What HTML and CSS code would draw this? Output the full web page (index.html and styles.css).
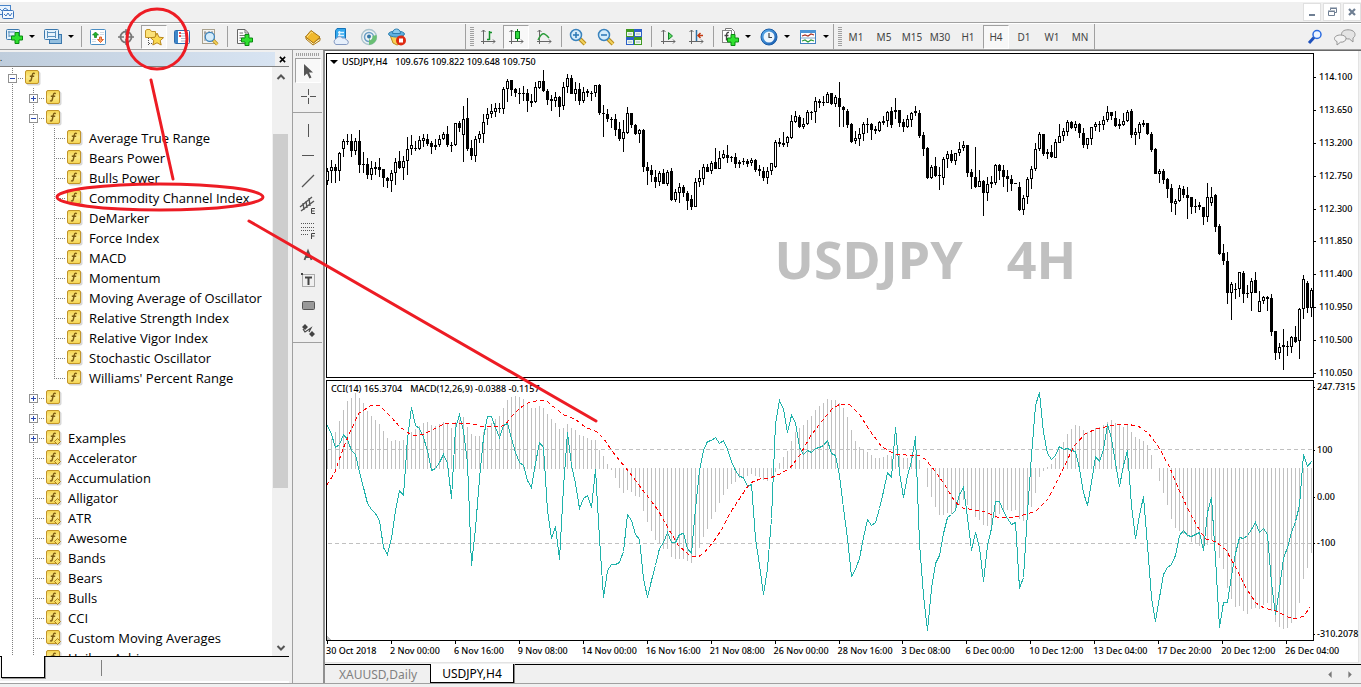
FILE: index.html
```html
<!DOCTYPE html>
<html lang="en">
<head>
<meta charset="utf-8">
<title>USDJPY,H4</title>
<link rel="stylesheet" href="styles.css">
</head>
<body>
<svg class="defs" aria-hidden="true">
  <defs>
    <linearGradient id="gold" x1="0" y1="0" x2="0" y2="1"><stop offset="0" stop-color="#f3d24c"/><stop offset="0.5" stop-color="#fbe98a"/><stop offset="1" stop-color="#f4d552"/></linearGradient>
    <linearGradient id="blue" x1="0" y1="0" x2="1" y2="1"><stop offset="0" stop-color="#5fb4f0"/><stop offset="1" stop-color="#1457ad"/></linearGradient>
    <symbol id="fn" viewBox="0 0 16 16">
      <rect x="1.5" y="1.5" width="14" height="14" rx="2" fill="#d8d8d8"/>
      <rect x="0.5" y="0.5" width="13" height="13" rx="1.5" fill="url(#gold)" stroke="#c2952a"/>
      <path d="M9.8 3.6C8 2.7 7.5 3.8 7.2 5.500L6.300 9.500C6 11 5.200 11.300 4 10.600M4.800 6.300H9.200" fill="none" stroke="#7d5c14" stroke-width="1.400"/>
    </symbol>
    <symbol id="fnc" viewBox="0 0 16 16">
      <use href="#fn"/>
      <path d="M11.500 8.500L14.500 11.500L11.500 14.500L8.500 11.500Z" fill="#f8df6a" stroke="#a87f1c"/>
    </symbol>
    <symbol id="plus" viewBox="0 0 12 12"><path d="M4 .5H8V4H11.500V8H8V11.500H4V8H.5V4H4Z" fill="#2fe02f" stroke="#0b8a12"/></symbol>
    <symbol id="magnify" viewBox="0 0 18 18">
      <path d="M11 11L16 16" stroke="#b98b1c" stroke-width="4"/><path d="M11 11L16 16" stroke="#f3d35c" stroke-width="2"/>
      <circle cx="7" cy="7" r="5.500" fill="#d5ecfa" stroke="#3a83bd" stroke-width="1.500"/>
    </symbol>
    <symbol id="axes" viewBox="0 0 18 18"><path d="M4.500 2V16M2 13.500H16M2.500 4L4.500 2L6.500 4M14 11.500L16 13.500L14 15.500" fill="none" stroke="#666"/></symbol>
  </defs>
</svg>

<div class="app">
  <header class="titlebar">
    <svg class="app-icon" viewBox="0 0 15 15"><rect x="-3.500" y=".5" width="14" height="9" fill="#e9f3fd" stroke="#4a84c8"/><path d="M0 4L2 6L5 3L8 5" fill="none" stroke="#4a84c8"/><rect x="2.500" y="5.500" width="11" height="8" rx="1" fill="#f4f9ff" stroke="#3b74bc"/><path d="M4 9L6 11L8 8L10 11L12 8" fill="none" stroke="#3b74bc"/></svg>
    <div class="window-buttons">
      <button aria-label="Minimize"><svg viewBox="0 0 16 16"><path d="M5 11H11" stroke="#6f7f93" stroke-width="2"/></svg></button>
      <button aria-label="Restore"><svg viewBox="0 0 16 16"><path d="M6.500 6V4.500H12.500V8.500H11M4.500 7.500H10.500V11.500H4.500ZM6 4H13M4 7H11" fill="none" stroke="#6f7f93"/></svg></button>
      <button aria-label="Close"><svg viewBox="0 0 16 16"><path d="M5 5L11 11M11 5L5 11" stroke="#6f7f93" stroke-width="2.200"/></svg></button>
    </div>
  </header>

  <nav class="toolbar">
    <div class="group">
      <button class="tool" aria-label="New chart"><svg viewBox="0 0 18 18"><rect x="1.500" y="1.500" width="13" height="10" rx="1" fill="#e6f2fb" stroke="#3b78ad"/><path d="M3 4H10M4 3V9M4 8H9" stroke="#5b91bd"/><use href="#plus" x="6" y="4" width="12" height="12"/></svg></button><button class="drop" aria-label="New chart list"></button>
      <button class="tool" aria-label="Profiles"><svg viewBox="0 0 18 18"><rect x="5.500" y="6.500" width="12" height="9" fill="#94bfdf" stroke="#3b78ad"/><rect x=".5" y="1.500" width="14" height="10" rx="1" fill="#e6f2fb" stroke="#3b78ad"/><path d="M3 4.500H12M3.500 3V10M11.500 3V10M3 8.500H12" stroke="#5b91bd"/></svg></button><button class="drop" aria-label="Profiles list"></button>
      <span class="sep"></span>
      <button class="tool" aria-label="Market watch"><svg viewBox="0 0 18 18"><rect x="1.500" y="1.500" width="15" height="15" rx="1" fill="#fff" stroke="#4a8ec4"/><path d="M11 4.500H15M11 6.500H15M3 11.500H7M3 13.500H7" stroke="#cfdae3"/><path d="M6.500 4L9.500 7H7.500V9.500H5.500V7H3.500Z" fill="#21b72b" stroke="#0e7d18" stroke-width=".7"/><path d="M11.500 14.500L8.500 11.500H10.500V9H12.500V11.500H14.500Z" fill="#f9a46a" stroke="#d8480f" stroke-width=".8"/></svg></button>
      <button class="tool" aria-label="Data window"><svg viewBox="0 0 18 18"><circle cx="9" cy="9" r="5.500" fill="none" stroke="#777" stroke-width="1.800"/><path d="M9 1V7M9 11V17M1 9H7M11 9H17" stroke="#777" stroke-width="1.500"/></svg></button>
      <button class="tool pressed" aria-label="Navigator"><svg viewBox="0 0 20 18"><path d="M1.500 9.500V2.500L3 1.500H6L7.500 3.500H11.500V9.500Z" fill="#fbe27a" stroke="#c29528"/><path d="M4.500 10V18M5 15.500H9" stroke="#555" stroke-dasharray="1 1"/><path d="M13 5L15 9.200L19.500 9.700L16.200 12.700L17.200 17L13 14.800L8.800 17L9.800 12.700L6.500 9.700L11 9.200Z" fill="#fbdb52" stroke="#b9861c"/></svg></button>
      <button class="tool" aria-label="Terminal"><svg viewBox="0 0 18 18"><rect x="1.500" y="2.500" width="15" height="13" rx="1" fill="#fff" stroke="#2d6cae"/><path d="M3.500 3V15" stroke="#3e86c9" stroke-width="3"/><path d="M8 5.500H15M8 8H15M8 10.500H15M8 13H15" stroke="#a8bed1"/><path d="M6 5H8M6 8H8" stroke="#e11" stroke-width="1.500"/></svg></button>
      <button class="tool" aria-label="Strategy tester"><svg viewBox="0 0 18 18"><rect x="1.500" y="1.500" width="12" height="14" fill="#f3f3f0" stroke="#aaa28e"/><path d="M4 3V13M8 3V9M11 3V7M3 5H12" stroke="#888"/><use href="#magnify" x="3" y="3" width="15" height="15"/></svg></button>
      <span class="sep"></span>
      <button class="tool" aria-label="New order"><svg viewBox="0 0 18 18"><path d="M2.500 1.500H10L13.500 5V15.500H2.500Z" fill="#fdfdfd" stroke="#666"/><path d="M10 1.500V5H13M4.500 5H8M4.500 7.500H11M4.500 10H9M4.500 12.500H8" stroke="#777" fill="none"/><use href="#plus" x="6" y="6" width="12" height="12"/></svg></button>
      <span class="gap"></span>
      <button class="tool" aria-label="MetaEditor"><svg viewBox="0 0 18 18"><path d="M2 8L9 15L16 10V12.500L9 17L2 11Z" fill="#fff1bb" stroke="#a87515"/><path d="M1.500 9L7 2.500L16 9L9.500 15Z" fill="#f1b92e" stroke="#a87515"/><path d="M3 9L7.500 4L9 5" stroke="#ffe48b" fill="none"/></svg></button>
      <button class="tool" aria-label="Virtual hosting"><svg viewBox="0 0 18 18"><path d="M3.500 2.500L5 .5H13.500V11H3.500Z" fill="#35a9ee" stroke="#1473b8"/><path d="M6 4.500H12M6 7.500H12M7.500 3V9" stroke="#dff3ff" stroke-width="1.500"/><path d="M4 16.500A3 3 0 0 1 3.800 11A4 4 0 0 1 10.500 10A3.200 3.200 0 0 1 14.500 12A2.300 2.300 0 0 1 14.500 16.500Z" fill="#e6effb" stroke="#8399c2"/></svg></button>
      <button class="tool" aria-label="Signals"><svg viewBox="0 0 18 18"><circle cx="9" cy="9" r="7.500" fill="#edf2f3" stroke="#a9c3cd" stroke-width="1.300"/><circle cx="9" cy="9" r="4.500" fill="none" stroke="#6c9fc5" stroke-width="1.500"/><path d="M9 9V17A8 8 0 0 0 16.500 7L12.500 8A4 4 0 0 1 10 12.500Z" fill="#6abf74"/><circle cx="9" cy="8.500" r="2" fill="#3577a8"/></svg></button>
      <button class="tool" aria-label="AutoTrading"><svg viewBox="0 0 18 18"><path d="M2 7L5 15L9 17L14 15L15 7Z" fill="#f7d053" stroke="#bb8a22"/><ellipse cx="8.500" cy="6" rx="8" ry="3" fill="#5eb0df" stroke="#2e7fb0"/><path d="M4.500 5.500C4.500-.5 12.500-.5 12.500 5.500Z" fill="#8dccee" stroke="#2e7fb0"/><circle cx="13" cy="12.500" r="5" fill="#de2b12"/><rect x="11" y="10.500" width="4" height="4" fill="#fff"/></svg></button>
    </div>
    <div class="group charts">
      <span class="grip"></span>
      <button class="tool" aria-label="Bar chart"><svg viewBox="0 0 18 18"><use href="#axes"/><path d="M10.500 3V12M8 11.500H10.500M10.500 4.500H13" stroke="#15902a" stroke-width="1.500"/></svg></button>
      <button class="tool pressed" aria-label="Candlesticks"><svg viewBox="0 0 18 18"><use href="#axes"/><path d="M10.500 1V13" stroke="#087b16"/><rect x="8.500" y="3.500" width="4" height="7" fill="#2fd83e" stroke="#087b16"/></svg></button>
      <button class="tool" aria-label="Line chart"><svg viewBox="0 0 18 18"><use href="#axes"/><path d="M3 12C7 4 9 4 14 10" fill="none" stroke="#2b9c3a" stroke-width="1.400"/></svg></button>
      <span class="sep"></span>
      <button class="tool" aria-label="Zoom in"><svg viewBox="0 0 18 18"><use href="#magnify"/><path d="M4 7H10M7 4V10" stroke="#2876b4" stroke-width="1.500"/></svg></button>
      <button class="tool" aria-label="Zoom out"><svg viewBox="0 0 18 18"><use href="#magnify"/><path d="M4 7H10" stroke="#2876b4" stroke-width="1.500"/></svg></button>
      <button class="tool" aria-label="Tile windows"><svg viewBox="0 0 18 18"><path d="M1 1H9V9H1ZM9 9H17V17H9Z" fill="#3f9a22"/><path d="M9 1H17V9H9ZM1 9H9V17H1Z" fill="#2c60c8"/><path d="M2 4H8V8H2ZM10 4H16V8H10ZM2 12H8V16H2ZM10 12H16V16H10Z" fill="#eef5ee"/><path d="M3 6H7M11 6H15M3 14H7M11 14H15" stroke="#9ab5bf"/></svg></button>
      <span class="sep"></span>
      <button class="tool" aria-label="Auto scroll"><svg viewBox="0 0 18 18"><use href="#axes"/><path d="M9.500 4.500L13.500 8L9.500 11.500Z" fill="#5fdc60" stroke="#12862a"/></svg></button>
      <button class="tool" aria-label="Chart shift"><svg viewBox="0 0 18 18"><use href="#axes"/><path d="M9.500 2V13" stroke="#2c72a8" stroke-width="1.500"/><path d="M16 7.500H12M13.500 5L11 7.500L13.500 10" fill="none" stroke="#c23a12" stroke-width="1.500"/></svg></button>
      <span class="sep"></span>
      <button class="tool" aria-label="Indicators"><svg viewBox="0 0 18 18"><path d="M4.500 3.500V.5H10.500L13.500 3.500V12.500H11" fill="#fff" stroke="#777"/><rect x="1.500" y="2.500" width="9" height="12" fill="#fff" stroke="#888"/><path d="M8 4.500C6 4 5.500 5.500 5.500 7.500V12.500M3.500 7.500H7.500" fill="none" stroke="#444" stroke-width="1.300"/><use href="#plus" x="6" y="6" width="12" height="12"/></svg></button><button class="drop" aria-label="Indicators list"></button>
      <button class="tool" aria-label="Periods"><svg viewBox="0 0 18 18"><circle cx="9" cy="9" r="8" fill="url(#blue)" stroke="#1a5ea8"/><circle cx="9" cy="9" r="5.500" fill="#edf6fd"/><path d="M9 5V9.500H12" fill="none" stroke="#444" stroke-width="1.200"/></svg></button><button class="drop" aria-label="Periods list"></button>
      <button class="tool" aria-label="Templates"><svg viewBox="0 0 18 18"><rect x="1.500" y="2.500" width="15" height="13" fill="#fff" stroke="#3f80bf"/><path d="M1 3.500H17" stroke="#4b95d6" stroke-width="3"/><path d="M3 8L6 7L9 8L12 6L15 7" fill="none" stroke="#a83225" stroke-width="1.200"/><path d="M2 10H16" stroke="#7ea8cc"/><path d="M3 13L6 12L9 14L12 12L15 13" fill="none" stroke="#2b9c3a" stroke-width="1.200"/></svg></button><button class="drop" aria-label="Templates list"></button>
    </div>
    <div class="group frames">
      <span class="grip"></span>
      <button class="tool">M1</button><button class="tool">M5</button><button class="tool">M15</button><button class="tool">M30</button><button class="tool">H1</button><button class="tool pressed">H4</button><button class="tool">D1</button><button class="tool">W1</button><button class="tool">MN</button>
    </div>
    <div class="group extras">
      <button class="tool" aria-label="Search"><svg viewBox="0 0 18 18"><circle cx="11" cy="6.500" r="4" fill="#eef5ff" stroke="#2a6be0" stroke-width="1.500"/><path d="M8 9.500L3 15" stroke="#1f52bd" stroke-width="3"/></svg></button>
      <button class="tool chat" aria-label="Chat"><svg viewBox="0 0 24 18"><path d="M20 10L20 14L16.500 11C11 11 8.500 8.500 8.500 6.500C8.500 3.500 11 1.800 15 1.800C19 1.800 22 3.500 22 6.500C22 8 21.500 9 20 10Z" fill="#e4e4e4" stroke="#969696"/><path d="M4 13.500L4 17L7.500 14.200C11 14.500 13 12.500 13 10.500C13 8.500 11 7 7.500 7C4 7 1.500 8.500 1.500 10.500C1.500 12 2.500 13 4 13.500Z" fill="#f3f3f3" stroke="#969696"/></svg></button>
    </div>
  </nav>

  <main class="workspace">
    <aside class="navigator">
      <div class="caption"><span class="caption-text">.</span><button class="close" aria-label="Close navigator"><svg viewBox="0 0 8 8"><path d="M1 1L7 7M7 1L1 7" stroke="#000" stroke-width="1.800"/></svg></button></div>
      <div class="tree-area">
        <div class="tree" id="tree"></div>
        <div class="scrollbar">
          <svg viewBox="0 0 10 10"><path d="M1.500 7L5 3.500L8.500 7" fill="none" stroke="#555" stroke-width="2"/></svg>
          <span class="thumb"></span>
          <svg viewBox="0 0 10 10"><path d="M1.500 3L5 6.500L8.500 3" fill="none" stroke="#555" stroke-width="2"/></svg>
        </div>
      </div>
      <div class="nav-tabs"><span class="nav-tab"></span><span class="nav-divider"></span></div>
    </aside>

    <div class="drawbar">
      <span class="grip-h"></span>
      <button class="pressed" aria-label="Cursor"><svg viewBox="0 0 18 18"><path d="M5 2V14L8 11.500L10.500 16.500L12.500 15.500L10 10.500H14Z" fill="#555"/></svg></button>
      <button aria-label="Crosshair"><svg viewBox="0 0 18 18"><path d="M9.500 2V8M9.500 11V17M2 9.500H8M11 9.500H17" stroke="#555"/></svg></button>
      <span class="rule"></span>
      <button aria-label="Vertical line"><svg viewBox="0 0 18 18"><path d="M9.500 3V16" stroke="#555"/></svg></button>
      <button aria-label="Horizontal line"><svg viewBox="0 0 18 18"><path d="M3 9.500H15" stroke="#555"/></svg></button>
      <button aria-label="Trendline"><svg viewBox="0 0 18 18"><path d="M3 16L15 4" stroke="#555" stroke-width="1.200"/></svg></button>
      <button aria-label="Channel"><svg viewBox="0 0 18 18"><path d="M1 11L13 1M2 15L15 5M4 7L5 14M7 5L8 12M10 2L11 10" stroke="#555" stroke-width="1.400"/><path d="M16 12.500H12.500V17.500H16M12.500 15H15.500" fill="none" stroke="#444"/></svg></button>
      <button aria-label="Fibonacci"><svg viewBox="0 0 18 18"><path d="M2 2.500H16M2 6.500H16M2 9.500H16M2 13.500H10" stroke="#555" stroke-dasharray="1 1"/><path d="M16 12.500H12.500V18M12.500 15H15.500" fill="none" stroke="#444"/></svg></button>
      <button aria-label="Text"><svg viewBox="0 0 18 18"><path d="M5.500 14L9 5L12.500 14M7 11H11" fill="none" stroke="#555" stroke-width="1.800"/></svg></button>
      <button aria-label="Label"><svg viewBox="0 0 18 18"><rect x="3.500" y="3.500" width="12" height="12" fill="none" stroke="#666" stroke-dasharray="1 1"/><path d="M6 6.500H13M9.500 6V14" stroke="#444" stroke-width="2"/><path d="M2 2H4V4H2Z" fill="#444"/></svg></button>
      <button aria-label="Rectangle"><svg viewBox="0 0 18 18"><rect x="3.500" y="5.500" width="12" height="8" rx="1" fill="#999" stroke="#555"/></svg></button>
      <button aria-label="Arrows"><svg viewBox="0 0 18 18"><path d="M6 3L9 6L6 9L3 6ZM13 10L16 13L13 16L10 13Z" fill="#444"/><path d="M4 8L6 11L12 7L10 11" fill="none" stroke="#444" stroke-width="1.200"/></svg></button>
      <span class="rule end"></span>
    </div>

    <section class="chart-window">
      <div class="panes">
        <div class="pane price">
          <div class="plot">
            <svg viewBox="326 53 988 325" preserveAspectRatio="none"><path id="wicks" class="wick"/><path id="bodies" class="body-down"/><path id="hollow" class="body-up"/></svg>
            <div class="watermark"><span>USDJPY</span><span>4H</span></div>
            <div class="plot-title"><span class="tri"></span><span class="symbol">USDJPY,H4</span><span>109.676 109.822 109.648 109.750</span></div>
          </div>
          <div class="axis price-axis"><span>114.100</span><span>113.650</span><span>113.200</span><span>112.750</span><span>112.300</span><span>111.850</span><span>111.400</span><span>110.950</span><span>110.500</span><span>110.050</span></div>
        </div>
        <div class="pane osc">
          <div class="plot">
            <svg viewBox="326 380 988 261" preserveAspectRatio="none"><path class="level" d="M328 449.500H1313M328 543.500H1313"/><path id="histogram" class="histogram"/><path id="cci" class="cci"/><path class="signal" d="M327 485L335 472L343 449L351 430L359 413L367 408L372 405L380 406L390 416L400 427L410 434L416 436L424 434L434 429L444 424L455 423L470 423L480 426L500 427L506 424L512 416L520 408L528 403L540 400L548 402L556 409L564 415L575 419L585 427L597 432L604 439L612 451L620 461L630 473L645 493L658 510L668 528L678 545L690 556L698 557L704 553L714 541L722 529L730 513L740 498L750 483L760 479L770 478L780 474L790 468L800 455L810 437L822 421L832 409L840 404L850 405L860 415L870 431L882 447L895 454L906 455L918 455L925 459L935 471L945 485L955 502L963 508L975 510L985 512L997 517L1010 518L1020 516L1036 511L1048 499L1056 483L1066 463L1074 446L1085 434L1096 429L1105 427L1115 425L1125 424L1138 426L1148 433L1158 446L1170 468L1180 492L1190 513L1200 531L1206 539L1216 542L1226 550L1236 568L1246 588L1256 603L1264 608L1276 611L1288 617L1296 619L1304 616L1310 607"/><path d="M327 635L332 641H327Z" fill="#c0c0c0"/></svg>
            <div class="plot-title"><span>CCI(14) 165.3704</span><span>MACD(12,26,9) -0.0388 -0.1157</span></div>
          </div>
          <div class="axis osc-axis"><span>247.7315</span><span>100</span><span>0.00</span><span>-100</span><span>-310.2078</span></div>
        </div>
        <div class="time-axis"><span>30 Oct 2018</span><span>2 Nov 00:00</span><span>6 Nov 16:00</span><span>9 Nov 08:00</span><span>14 Nov 00:00</span><span>16 Nov 16:00</span><span>21 Nov 08:00</span><span>26 Nov 00:00</span><span>28 Nov 16:00</span><span>3 Dec 08:00</span><span>6 Dec 00:00</span><span>10 Dec 12:00</span><span>13 Dec 04:00</span><span>17 Dec 20:00</span><span>20 Dec 12:00</span><span>26 Dec 04:00</span></div>
      </div>
      <div class="chart-tabs">
        <button class="chart-tab">XAUUSD,Daily</button><button class="chart-tab active">USDJPY,H4</button>
        <span class="tab-arrows"><button aria-label="Previous"><svg viewBox="0 0 8 8"><path d="M5 1V7L2 4Z" fill="#777"/></svg></button><button aria-label="Next"><svg viewBox="0 0 8 8"><path d="M3 1V7L6 4Z" fill="#777"/></svg></button></span>
      </div>
    </section>
  </main>

  <svg class="notes" aria-hidden="true"><circle cx="157" cy="39" r="30"/><path d="M151 80L173 179M249 221L596 421"/><ellipse cx="160" cy="197" rx="103" ry="13"/></svg>
</div>
<script src="app.js"></script>
</body>
</html>
```

FILE: styles.css
```css
* { box-sizing: border-box; }
body { margin: 0; font-family: "Noto Sans", "Open Sans", sans-serif; font-size: 12px; color: #000; background: #f0f0f0; }
button { border: 0; padding: 0; background: none; font: inherit; color: inherit; }
svg { display: block; }
.defs { position: absolute; width: 0; height: 0; }

.app { position: relative; display: flex; flex-direction: column; height: 100vh; padding-bottom: 3px; overflow: hidden; }

.titlebar { display: flex; justify-content: space-between; align-items: center; height: 23px; flex: none; border-top: 2px solid #fff; border-bottom: 1px solid #a0a0a0; }
.app-icon { width: 15px; height: 15px; }
.window-buttons { display: flex; gap: 2px; }
.window-buttons button { width: 18px; height: 18px; background: #fff; border: 1px solid #e0e0e0; }

.toolbar { display: flex; height: 27px; flex: none; border-top: 1px solid #fff; border-bottom: 1px solid #a0a0a0; }
.group { display: flex; align-items: center; }
.group.charts { margin-left: 54px; }
.group.charts, .group.frames { border-left: 1px solid #a0a0a0; padding-left: 4px; }
.group.frames { border-right: 1px solid #a0a0a0; font-size: 10px; color: #444; }
.group.extras { margin-left: auto; }
.tool { width: 28px; height: 24px; display: flex; align-items: center; justify-content: center; }
.tool svg { width: 18px; height: 18px; }
.tool.chat { width: 32px; margin-right: 0; }
.tool.chat svg { width: 24px; }
.pressed { border: 1px solid #a0a0a0; border-right-color: #fff; border-bottom-color: #fff; background: #f8f8f8; }
.tool.pressed { width: 26px; margin: 0 1px; }
.tool.pressed svg { width: 20px; flex: none; }
.drop { width: 11px; height: 24px; display: flex; align-items: center; justify-content: flex-start; }
.drop::before { content: ""; margin-left: 1px; border: 3px solid transparent; border-top: 3px solid #000; border-bottom: 0; }
.sep { width: 6px; height: 21px; background: linear-gradient(#a0a0a0, #a0a0a0) 3px 0 / 1px 100% no-repeat; }
.gap { width: 41px; }
.grip { width: 4px; height: 20px; background: repeating-linear-gradient(#a0a0a0 0 1px, transparent 1px 2px); }

.workspace { display: flex; flex: 1; min-height: 0; border-bottom: 1px solid #a0a0a0; }

.navigator { display: flex; flex-direction: column; width: 289px; flex: none; padding-top: 2px; }
.caption { display: flex; height: 15px; flex: none; border-bottom: 1px solid #808080; font-size: 8px; line-height: 12px; }
.caption-text { flex: 1; background: linear-gradient(to right, #bfcddc, #d8e4f2); }
.close { width: 14px; display: flex; align-items: center; justify-content: center; }
.close svg { width: 7px; height: 7px; }
.tree-area { display: flex; flex: 1; min-height: 0; background: #fff; }
.tree { flex: 1; min-width: 0; overflow: hidden; padding-top: 1px; font-family: "Open Sans", "Noto Sans", sans-serif; font-size: 13px; }
.row { display: flex; align-items: center; height: 20px; padding-left: 2px; white-space: nowrap; }
.guide { position: relative; width: 21px; height: 20px; flex: none; display: flex; align-items: center; }
.line-v { background: repeating-linear-gradient(#808080 0 1px, transparent 1px 2px) 10px 0 / 1px 100% no-repeat; }
.line-h::before { content: ""; width: 11px; height: 1px; margin-left: 10px; background: repeating-linear-gradient(to right, #808080 0 1px, transparent 1px 2px); }
.line-last { background-size: 1px 50%; }
.expander { position: absolute; left: 6px; top: 6px; width: 9px; height: 9px; border: 1px solid #919191; background: linear-gradient(#2b4bb0, #2b4bb0) center / 5px 1px no-repeat #fff; }
.expander.closed { background: linear-gradient(#2b4bb0, #2b4bb0) center / 5px 1px no-repeat, linear-gradient(#2b4bb0, #2b4bb0) center / 1px 5px no-repeat, #fff; }
.fn { width: 16px; height: 16px; margin: 0 6px 0 2px; flex: none; }
.scrollbar { display: flex; flex-direction: column; align-items: center; width: 17px; padding: 5px 0 3px; background: #f0f0f0; }
.scrollbar svg { width: 10px; height: 10px; flex: none; }
.thumb { width: 15px; height: 61%; margin: 52px 0 auto; background: #cdcdcd; }
.nav-tabs { display: flex; height: 27px; flex: none; border-top: 1px solid #000; border-bottom: 2px solid #fff; }
.nav-tab { width: 44px; height: 22px; margin: -1px 0 0 1px; background: #fff; border: 1px solid #000; border-top: 0; box-shadow: 1px 1px #999; }
.nav-divider { width: 1px; height: 16px; margin: 3px 0 0 56px; background: #808080; }

.drawbar { display: flex; flex-direction: column; align-items: center; width: 31px; margin-left: 3px; padding-right: 1px; flex: none; border-left: 1px solid #a0a0a0; }
.drawbar button { width: 26px; height: 25px; flex: none; display: flex; align-items: center; justify-content: center; }
.drawbar button svg { width: 18px; height: 18px; }
.grip-h { width: 24px; height: 3px; margin: 3px 0 2px; flex: none; background: repeating-linear-gradient(to right, #a0a0a0 0 1px, transparent 1px 2px); }
.rule { width: 100%; height: 1px; flex: none; margin: 4px 0; background: #a0a0a0; }
.rule.end { margin-top: 0; }

.chart-window { display: flex; flex-direction: column; flex: 1; min-width: 0; border-left: 2px solid #909090; border-top: 1px solid #696969; }
.panes { display: flex; flex-direction: column; flex: 1; min-height: 0; padding: 2px 0 0 1px; margin-right: 2px; background: #fff; border-right: 1px solid #e3e3e3; border-bottom: 1px solid #e3e3e3; font-size: 9px; line-height: 10px; font-weight: 500; }
.pane { display: flex; min-height: 0; }
.price { flex: 325 1 0; margin-bottom: 2px; }
.osc { flex: 261 1 0; }
.plot { position: relative; flex: 1; min-width: 0; }
.plot svg { width: 100%; height: 100%; shape-rendering: crispEdges; }
.plot::after { content: ""; position: absolute; inset: 0; border: 1px solid #000; }
.wick { fill: none; stroke: #000; }
.body-down { fill: #000; }
.body-up { fill: #fff; stroke: #000; }
.histogram { fill: none; stroke: #c0c0c0; }
.cci { fill: none; stroke: #20b2aa; }
.signal { fill: none; stroke: #f00; stroke-dasharray: 4 3; }
.level { stroke: #c0c0c0; stroke-dasharray: 4 3; }
.plot-title { position: absolute; left: 5px; top: 4px; display: flex; align-items: center; gap: 8px; white-space: nowrap; }
.tri { border: 4px solid transparent; border-top-color: #000; border-bottom: 0; margin: 0 -4px 0 -1px; }
.watermark { position: absolute; left: 45%; top: 54%; padding-left: 4px; display: flex; gap: 44px; font-size: 52px; line-height: 60px; font-weight: 700; color: #c0c0c0; }
.axis { width: 44px; flex: none; white-space: nowrap; }
.axis span { display: flex; gap: 3px; }
.axis span::before { content: ""; width: 2px; height: 1px; margin-top: 5px; background: #000; }
.price-axis { display: flex; flex-direction: column; justify-content: space-between; padding-top: 19px; }
.osc-axis { display: grid; grid-template-rows: 63fr 47fr 47fr 91fr 12fr; padding-top: 2px; }
.osc-axis span { gap: 2px; }
.osc-axis span::before { width: 1px; }
.time-axis { display: grid; grid-template-columns: repeat(16, minmax(0, 64fr)) 9fr; height: 21px; flex: none; white-space: nowrap; }
.time-axis span::before { content: ""; display: block; width: 1px; height: 3px; margin: 0 0 2px 1px; background: #000; }

.chart-tabs { display: flex; height: 19px; flex: none; border-top: 1px solid #000; margin-top: 1px; padding-left: 1px; font-size: 12px; line-height: 17px; }
.chart-tab { height: 18px; padding: 0 13px; color: #808080; }
.chart-tab.active { margin-top: -1px; height: 19px; padding: 0 11px; color: #000; background: #fff; border: 1px solid #000; border-top: 0; box-shadow: 1px 0 #888; }
.tab-arrows { display: flex; gap: 10px; margin: 0 7px 0 auto; align-items: center; }
.tab-arrows svg { width: 9px; height: 9px; }

.notes { position: absolute; inset: 0; width: 100%; height: 100%; pointer-events: none; fill: none; stroke: #ed1c24; stroke-width: 3; stroke-linecap: round; }
```

FILE: app.js
```js
// Bars are "high low bodyTop bodyBottom kind": u = hollow, d = filled.
const bars = `168 185 171 181 u,160 183 167 171 u,164 183 167 171 d,152 181 153 171 u,139 157 141 149 u,134 145 141 142 d,134 157 141 151 d,138 155 141 151 u,130 173 141 165 d,152 173 164 165 d,158 179 164 175 d,161 180 168 175 u,162 175 167 169 u,158 177 167 170 d,169 187 169 178 d,177 188 178 181 d,170 192 173 181 u,158 185 162 173 u,151 169 161 168 d,156 180 161 168 u,137 175 149 161 u,135 155 145 149 u,141 151 148 149 d,136 150 140 149 u,134 147 138 141 u,134 146 139 144 d,141 154 143 147 d,139 150 145 147 u,135 147 139 145 u,132 140 134 139 u,126 147 134 145 d,142 152 145 146 d,123 146 123 145 u,121 132 123 128 d,106 162 119 135 u,98 151 118 149 d,140 160 148 156 d,136 162 139 156 u,131 143 134 139 u,114 143 122 134 u,108 125 114 119 u,104 118 111 114 u,103 117 108 112 u,103 113 108 109 d,87 114 89 109 u,79 102 81 89 u,80 96 80 90 d,88 97 89 93 d,88 104 93 94 d,86 101 93 94 d,89 112 93 101 d,94 107 101 103 d,82 103 87 102 u,81 89 81 88 u,70 92 81 91 d,89 105 91 100 d,95 111 99 101 d,92 107 97 101 u,96 117 97 107 d,82 110 87 106 u,74 93 78 87 u,75 94 78 94 d,82 101 89 94 u,83 105 89 101 d,87 103 92 101 u,89 97 91 93 d,91 101 93 94 d,85 97 85 93 u,84 115 85 113 d,105 137 113 114 d,109 122 114 119 d,117 128 119 120 d,114 136 119 130 d,122 141 129 139 d,120 152 132 139 u,107 134 113 133 u,113 128 113 125 d,124 135 125 134 d,129 143 130 134 u,129 172 130 167 d,162 185 167 171 d,165 182 170 175 d,170 188 177 182 d,171 186 173 182 u,169 184 173 184 d,170 186 172 184 u,168 201 171 200 d,189 202 192 200 u,183 203 187 193 u,185 197 187 193 d,191 210 193 201 d,195 210 199 207 d,178 207 182 207 u,170 187 178 182 u,164 185 167 179 u,164 172 167 172 d,161 174 163 171 u,148 169 162 169 d,151 169 158 169 u,150 159 154 158 u,145 163 155 158 d,156 162 157 158 d,153 168 157 164 d,160 168 162 164 u,158 165 161 162 d,159 167 161 164 d,158 166 160 163 u,159 172 160 170 d,165 176 169 171 d,167 181 171 178 d,167 184 171 178 u,163 175 163 171 u,140 168 142 167 u,138 147 142 144 d,132 147 143 145 u,136 147 137 143 u,115 139 121 138 u,111 123 116 122 u,115 128 117 127 d,118 129 124 127 u,110 125 112 124 u,111 120 112 113 d,97 123 101 112 u,99 108 101 103 d,96 106 102 103 d,92 103 94 103 u,93 105 93 104 d,95 107 97 104 u,82 127 98 107 d,106 127 107 110 d,109 128 111 125 d,123 143 124 142 d,131 144 138 141 u,128 146 134 139 u,122 141 124 134 u,118 133 124 125 d,123 140 124 130 d,126 134 129 131 d,121 132 122 131 u,116 125 121 123 u,111 127 112 121 u,107 128 111 125 d,98 119 110 112 u,110 127 110 123 d,119 132 122 127 d,115 128 119 127 u,112 127 113 120 u,106 116 111 113 d,110 138 113 136 d,132 156 135 149 d,147 179 148 178 d,165 179 167 178 u,157 177 166 176 d,167 190 175 176 d,157 185 159 178 u,151 168 154 159 u,150 163 154 161 d,153 165 153 161 u,142 156 149 153 u,141 151 145 148 u,145 177 145 173 d,169 189 172 177 d,147 188 177 187 d,170 187 181 187 u,180 216 181 193 d,177 201 184 193 u,176 188 182 184 u,164 185 165 183 u,164 180 165 171 d,165 187 170 177 d,170 192 176 179 d,175 191 179 184 d,183 184 183 184 d,182 211 187 210 d,195 215 198 210 u,177 204 179 197 u,166 189 169 179 u,143 171 149 169 u,132 151 134 149 u,134 156 134 154 d,149 159 152 154 u,145 158 152 157 d,139 158 142 158 u,124 143 136 143 u,128 141 131 136 u,120 136 122 132 u,121 129 122 128 d,121 131 124 128 u,123 138 124 133 d,128 148 133 145 d,138 149 138 145 u,127 145 127 139 u,122 131 124 127 u,121 132 124 125 d,116 130 120 125 u,106 122 112 120 u,112 120 112 116 d,111 127 118 126 d,119 129 124 126 d,113 126 121 125 u,110 122 112 121 u,109 138 111 135 d,128 145 132 135 u,122 139 124 133 u,120 127 123 125 u,123 135 123 134 d,132 152 134 150 d,148 174 149 174 d,169 183 171 174 u,169 184 171 180 d,178 198 179 189 d,184 212 188 203 d,199 215 201 204 u,185 202 188 201 u,186 198 189 195 d,187 219 195 198 d,197 214 197 207 d,199 213 206 207 d,202 210 205 207 d,207 225 207 217 d,183 222 197 217 u,187 206 197 203 u,194 232 195 227 d,224 255 226 254 d,244 265 253 261 d,252 304 261 293 d,282 320 284 293 u,283 299 289 290 d,272 297 272 289 u,271 303 273 294 d,285 298 293 294 d,278 311 281 293 u,272 293 280 293 d,291 312 301 312 u,296 304 297 301 u,296 311 297 299 d,294 336 298 332 d,331 360 331 353 d,343 359 347 353 u,329 370 345 347 u,341 356 346 347 d,336 353 337 347 u,326 343 337 342 d,308 359 309 341 u,275 319 279 309 u,281 313 283 308 d,288 317 290 308 u`.split(",").map(b => b.split(" "));

const macd = [450,439,432,421,410,401,398,393,398,403,411,416,420,424,431,438,441,440,441,440,438,432,429,426,423,422,425,426,424,422,424,428,422,420,417,427,434,436,436,432,428,423,419,416,408,400,397,396,397,399,404,408,408,406,408,414,419,423,429,428,424,428,430,435,436,438,440,440,450,456,464,470,478,488,493,490,492,496,497,511,522,531,540,543,549,549,557,559,559,559,561,563,557,548,537,529,519,512,503,495,489,484,482,478,477,476,474,476,477,480,481,478,472,463,457,451,441,432,428,425,420,416,410,406,403,399,400,400,403,408,417,430,441,447,449,452,455,458,458,457,455,456,454,455,458,458,455,454,460,468,487,497,507,515,515,513,514,511,505,500,505,510,517,520,525,526,525,518,514,511,510,511,510,519,521,515,507,493,477,471,467,464,458,449,442,434,429,425,426,430,432,430,428,427,425,422,420,423,425,427,425,432,437,439,441,445,455,468,481,493,505,519,528,531,534,537,542,544,546,549,545,540,543,558,569,588,599,607,606,611,614,609,608,609,605,603,611,622,627,629,628,623,619,603,579,568,553];

const cci = [425,434,447,444,434,439,450,454,472,487,503,509,513,520,547,554,538,510,490,495,438,407,425,428,437,450,470,468,462,454,463,498,428,414,430,462,565,528,478,437,416,416,427,437,425,423,438,452,462,465,480,487,463,442,447,510,538,526,559,487,432,465,483,508,498,495,507,469,538,597,570,564,564,562,551,514,520,534,539,578,597,580,565,548,542,532,542,542,534,533,548,553,508,470,450,441,440,437,443,440,449,461,470,476,477,486,484,538,565,594,568,518,423,400,409,432,415,422,447,454,450,452,448,447,445,440,453,455,475,508,538,576,569,558,537,519,525,522,508,491,472,477,427,472,497,475,461,436,543,595,630,588,563,555,533,517,514,510,494,487,517,550,532,547,581,545,528,501,501,511,518,524,522,588,577,512,455,405,392,432,453,459,455,446,449,448,450,451,468,492,505,482,456,461,449,424,438,463,486,465,450,505,538,515,496,545,597,621,597,574,567,564,555,535,530,535,536,534,532,550,512,497,558,627,602,602,575,553,537,538,535,529,522,532,528,534,582,614,588,558,547,532,521,505,454,466,461];

const step = 4, firstX = 327, zeroY = 468;
let wicks = "", filled = "", hollow = "", histogram = "", line = "";
bars.forEach(([high, low, top, bottom, kind], i) => {
  const x = firstX + i * step;
  wicks += `M${x + 0.5} ${high}V${low}`;
  if (kind === "d") filled += `M${x - 1} ${top}H${x + 2}V${bottom}H${x - 1}Z`;
  else hollow += `M${x - 0.5} ${+top + 0.5}H${x + 1.5}V${bottom - 0.5}H${x - 0.5}Z`;
});
macd.forEach((y, i) => { histogram += `M${firstX + i * step + 0.5} ${y}V${y < zeroY ? zeroY + 1 : zeroY}`; });
cci.forEach((y, i) => { line += `${i ? "L" : "M"}${firstX + i * step + 0.5} ${y + 0.5}`; });
const draw = (id, d) => document.getElementById(id).setAttribute("d", d);
draw("wicks", wicks);
draw("bodies", filled);
draw("hollow", hollow);
draw("histogram", histogram);
draw("cci", line);

// Tree rows: level, label, expander state.
const rows = [[0, "", "open"], [1, "", "closed"], [1, "", "open"],
  ...["Average True Range", "Bears Power", "Bulls Power", "Commodity Channel Index", "DeMarker", "Force Index", "MACD", "Momentum", "Moving Average of Oscillator", "Relative Strength Index", "Relative Vigor Index", "Stochastic Oscillator", "Williams' Percent Range"].map(t => [2, t]),
  [1, "", "closed"], [1, "", "closed"], [1, "Examples", "closed"],
  ...["Accelerator", "Accumulation", "Alligator", "ATR", "Awesome", "Bands", "Bears", "Bulls", "CCI", "Custom Moving Averages", "Heiken Ashi"].map(t => [1, t])];
document.getElementById("tree").innerHTML = rows.map(([level, label, state], n) => {
  let guides = "";
  for (let g = 0; g <= level; g++) {
    const own = g === level;
    const last = own && level === 2 && rows[n + 1][0] < 2;
    guides += `<span class="guide line-v${own ? " line-h" : ""}${last ? " line-last" : ""}">${own && state ? `<span class="expander ${state}"></span>` : ""}</span>`;
  }
  const icon = level === 1 && label ? "fnc" : "fn";
  return `<div class="row">${guides}<svg class="fn"><use href="#${icon}"/></svg><span>${label}</span></div>`;
}).join("");
```
